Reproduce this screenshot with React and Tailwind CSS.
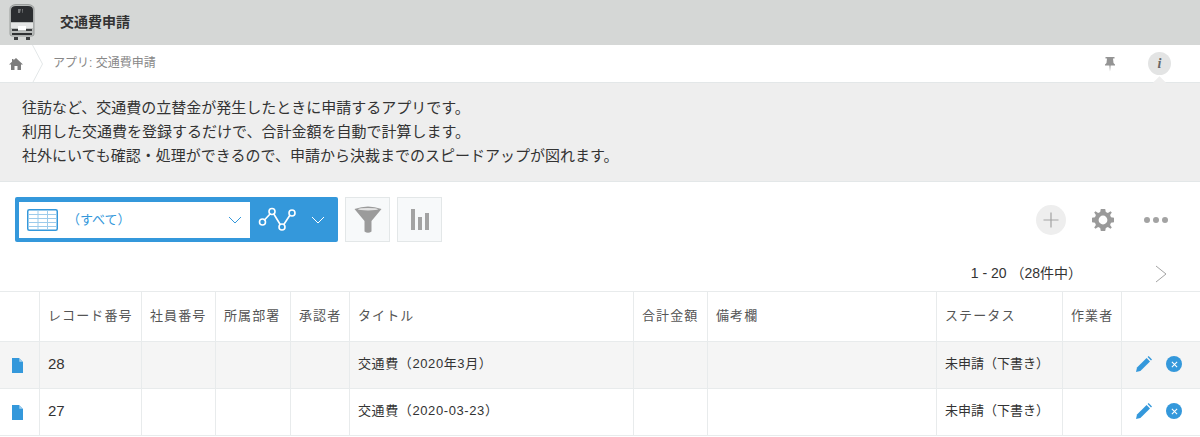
const FONT = { fontFamily: '"Liberation Sans", "Noto Sans CJK JP", sans-serif' }

const COLUMNS = [
    { label: '', width: 'w-[40px]' },
    { label: 'レコード番号', width: 'w-[102px]' },
    { label: '社員番号', width: 'w-[74px]' },
    { label: '所属部署', width: 'w-[75px]' },
    { label: '承認者', width: 'w-[59px]' },
    { label: 'タイトル', width: 'w-[284px]' },
    { label: '合計金額', width: 'w-[74px]' },
    { label: '備考欄', width: 'w-[229px]' },
    { label: 'ステータス', width: 'w-[126px]' },
    { label: '作業者', width: 'w-[59px]' },
    { label: '', width: 'flex-1' },
]

const ROWS = [
    { id: '28', title: '交通費（2020年3月）', status: '未申請（下書き）', bg: 'bg-[#f5f5f5]' },
    { id: '27', title: '交通費（2020-03-23）', status: '未申請（下書き）', bg: 'bg-white' },
]

const TrainIcon = () => (
    <svg width="30" height="40" viewBox="0 0 30 40" className="shrink-0">
        <path d="M3 6 Q3 2 9 1.5 L21 1.5 Q27 2 27 6 L27 31 Q27 33 25 33 L5 33 Q3 33 3 31 Z" fill="#b9bcbb" stroke="#9b9e9d" />
        <path d="M4 7 Q4 3 9 3 L21 3 Q26 3 26 7 L26 19 L4 19 Z" fill="#2b2d30" />
        <path d="M11 6 H14 L13 10 H11 Z M15 6 H16 L15.5 10 H15 Z" fill="#77797a" />
        <rect x="4" y="20" width="22" height="5" fill="#e4e5e5" />
        <rect x="11" y="23" width="8" height="4" fill="#ffffff" />
        <rect x="5" y="26" width="6" height="2" fill="#3b3d3f" />
        <rect x="19" y="26" width="6" height="2" fill="#3b3d3f" />
        <rect x="5" y="30" width="20" height="2" fill="#2f3133" />
        <rect x="7" y="34" width="4" height="3" fill="#3b3d3f" />
        <rect x="19" y="34" width="4" height="3" fill="#3b3d3f" />
    </svg>
)

const HomeIcon = () => (
    <svg width="14" height="14" viewBox="0 0 14 14" fill="#7d7d7d">
        <path d="M7 1 L14 7.5 L12 7.5 L12 13 L8.5 13 L8.5 9 L5.5 9 L5.5 13 L2 13 L2 7.5 L0 7.5 L3 4.7 L3 2 L4.5 2 L4.5 3.3 Z" />
    </svg>
)

const PinIcon = () => (
    <svg width="12" height="16" viewBox="0 0 12 16" fill="#949494">
        <path d="M1.5 1 H10.5 V2.5 H9 L9.5 7 L11 8.5 V9.5 H6.6 L6 15.5 L5.4 9.5 H1 V8.5 L2.5 7 L3 2.5 H1.5 Z" />
    </svg>
)

const TableIcon = () => (
    <svg width="31" height="22" viewBox="0 0 31 22">
        <rect x="0.75" y="0.75" width="29.5" height="20.5" rx="1.5" fill="#ffffff" stroke="#3498db" strokeWidth="1.5" />
        <path d="M1 5.5 H30 M1 9.5 H30 M1 13.5 H30 M1 17.5 H30 M11 1 V21 M20.5 1 V21" stroke="#9ccbeb" strokeWidth="1" fill="none" />
    </svg>
)

const GraphIcon = () => (
    <svg width="40" height="26" viewBox="0 0 40 26" fill="none" stroke="#ffffff" strokeWidth="1.6">
        <path d="M6 13.5 L12.5 6.5 M15.5 6.5 L22.5 18 M25.5 18 L32 8" />
        <circle cx="4.5" cy="15" r="3" />
        <circle cx="14" cy="4.5" r="3" />
        <circle cx="24" cy="20" r="3" />
        <circle cx="34" cy="6" r="3" />
    </svg>
)

const SelectChevron = ({ color }) => (
    <svg width="14" height="8" viewBox="0 0 14 8" fill="none" stroke={color} strokeWidth="1">
        <path d="M1 1 L7 7 L13 1" />
    </svg>
)

const FunnelIcon = () => (
    <svg width="28" height="28" viewBox="0 0 28 28">
        <path d="M0.5 3 Q14 -2 27.5 3 L17.5 15 V25.5 Q14 28 10.5 25.5 V15 Z" fill="#9b9b9b" />
        <ellipse cx="14" cy="3.2" rx="10" ry="1.3" fill="#e4e4e4" />
    </svg>
)

const BarsIcon = () => (
    <svg width="18" height="21" viewBox="0 0 18 21" fill="#a3a3a3">
        <rect x="0" y="0" width="4" height="21" />
        <rect x="7" y="8" width="4" height="13" />
        <rect x="14" y="4" width="4" height="17" />
    </svg>
)

const GearIcon = () => (
    <svg width="24" height="24" viewBox="0 0 24 24" fill="#9a9a9a">
        <path
            fillRule="evenodd"
            d="M9.8 1 H14.2 L14.8 4 L16.9 4.9 L19.5 3.2 L20.8 4.5 L19.1 7.1 L20 9.2 L23 9.8 V14.2 L20 14.8 L19.1 16.9 L20.8 19.5 L19.5 20.8 L16.9 19.1 L14.8 20 L14.2 23 H9.8 L9.2 20 L7.1 19.1 L4.5 20.8 L3.2 19.5 L4.9 16.9 L4 14.8 L1 14.2 V9.8 L4 9.2 L4.9 7.1 L3.2 4.5 L4.5 3.2 L7.1 4.9 L9.2 4 Z M12 7.6 A4.4 4.4 0 1 0 12 16.4 A4.4 4.4 0 1 0 12 7.6 Z"
        />
    </svg>
)

const FileIcon = () => (
    <svg width="11" height="15" viewBox="0 0 11 15" className="shrink-0">
        <path d="M0 0 H7 L11 4 V15 H0 Z" fill="#3498db" />
        <path d="M7.3 0.6 L10.4 3.7 H7.3 Z" fill="#a9d3f0" />
    </svg>
)

const PencilIcon = () => (
    <svg width="16" height="16" viewBox="0 0 16 16" fill="#3498db">
        <path d="M0 16 L1 11.6 L10.6 2 L14 5.4 L4.4 15 Z" />
        <path d="M11.6 1 L12.6 0 L16 3.4 L15 4.4 Z" />
    </svg>
)

const DeleteIcon = () => (
    <span className="flex h-[16px] w-[16px] items-center justify-center rounded-full bg-[#3498db]">
        <svg width="7" height="7" viewBox="0 0 8 8" stroke="#ffffff" strokeWidth="1.2">
            <path d="M1 1 L7 7 M7 1 L1 7" />
        </svg>
    </span>
)

const App = () => {
    return (
        <div className="h-[437px] w-[1200px] overflow-hidden bg-white" style={FONT}>
            <div className="flex h-[45px] items-center bg-[#d5d7d6] pl-[7px]">
                <TrainIcon />
                <h1 className="ml-[23px] pb-[1px] text-[14px] font-bold text-[#333333]">交通費申請</h1>
            </div>

            <div className="flex h-[38px] items-center border-b border-[#e3e7e8] bg-white">
                <div className="flex w-[32px] justify-center">
                    <HomeIcon />
                </div>
                <svg width="12" height="38" viewBox="0 0 12 38" fill="none" stroke="#e3e7e8" className="shrink-0">
                    <path d="M0.5 0 L10.5 19 L0.5 38" />
                </svg>
                <span className="ml-[9px] pb-[2px] text-[12px] text-[#888888]">アプリ: 交通費申請</span>
                <div className="ml-auto flex items-center pr-[29px]">
                    <PinIcon />
                    <span className="ml-[32px] flex h-[23px] w-[23px] items-center justify-center rounded-full bg-[#e3e4e4] font-['Liberation_Serif'] text-[14px] font-bold italic text-[#666666]">
                        i
                    </span>
                </div>
            </div>

            <div className="relative h-[99px] border-b border-[#e3e7e8] bg-[#eeeeee] px-[22px] pt-[13px] text-[15px] leading-[24px] text-[#333333]">
                <span className="absolute right-[36px] top-[-5px] h-[9px] w-[9px] rotate-45 bg-[#eeeeee]" />
                <p>往訪など、交通費の立替金が発生したときに申請するアプリです。</p>
                <p>利用した交通費を登録するだけで、合計金額を自動で計算します。</p>
                <p>社外にいても確認・処理ができるので、申請から決裁までのスピードアップが図れます。</p>
            </div>

            <div className="flex h-[74px] items-center pt-[1px] pl-[15px] pr-[32px]">
                <div className="flex h-[45px] w-[323px] items-center rounded-[2px] bg-[#3498db] pl-[4px]">
                    <div className="flex h-[36px] w-[231px] items-center bg-white pl-[8px] pr-[8px]">
                        <TableIcon />
                        <span className="ml-[9px] text-[13px] text-[#3498db]">（すべて）</span>
                        <span className="ml-auto">
                            <SelectChevron color="#3498db" />
                        </span>
                    </div>
                    <div className="ml-[8px]">
                        <GraphIcon />
                    </div>
                    <span className="ml-[13px]">
                        <SelectChevron color="#ffffff" />
                    </span>
                </div>
                <button type="button" className="ml-[7px] flex h-[45px] w-[45px] items-center justify-center border border-[#e3e7e8] bg-[#f7f9fa]">
                    <FunnelIcon />
                </button>
                <button type="button" className="ml-[7px] flex h-[45px] w-[45px] items-center justify-center border border-[#e3e7e8] bg-[#f7f9fa]">
                    <BarsIcon />
                </button>
                <div className="ml-auto flex items-center">
                    <span className="flex h-[30px] w-[30px] items-center justify-center rounded-full bg-[#eeeeee]">
                        <svg width="16" height="16" viewBox="0 0 16 16" stroke="#a3a3a3" strokeWidth="1.2">
                            <path d="M8 0.5 V15.5 M0.5 8 H15.5" />
                        </svg>
                    </span>
                    <span className="ml-[25px]">
                        <GearIcon />
                    </span>
                    <span className="ml-[29px] flex gap-[3px]">
                        <span className="h-[6px] w-[6px] rounded-full bg-[#a3a3a3]" />
                        <span className="h-[6px] w-[6px] rounded-full bg-[#a3a3a3]" />
                        <span className="h-[6px] w-[6px] rounded-full bg-[#a3a3a3]" />
                    </span>
                </div>
            </div>

            <div className="flex h-[35px] items-center justify-end pr-[33px] text-[14px] text-[#333333]">
                <span>1 - 20 （28件中）</span>
                <svg width="12" height="18" viewBox="0 0 12 18" fill="none" stroke="#a3a3a3" strokeWidth="1" className="ml-[73px]">
                    <path d="M1 1 L11 9 L1 17" />
                </svg>
            </div>

            <div className="border-y border-[#e8ebec]">
                <div className="flex h-[50px] border-b border-[#e8ebec] bg-white">
                    {COLUMNS.map((col, i) => (
                        <div
                            key={i}
                            className={`flex items-center border-r border-[#e8ebec] pb-[1px] pl-[8px] text-[13px] tracking-[1.1px] text-[#555555] last:border-r-0 ${col.width}`}
                        >
                            {col.label}
                        </div>
                    ))}
                </div>
                {ROWS.map((row) => (
                    <div key={row.id} className={`flex h-[47px] border-b border-[#e8ebec] text-[#333333] last:h-[46px] last:border-b-0 ${row.bg}`}>
                        <div className="flex w-[40px] items-center border-r border-[#e8ebec] pl-[12px]">
                            <FileIcon />
                        </div>
                        <div className="flex w-[102px] items-center border-r border-[#e8ebec] pb-[1px] pl-[8px] text-[15px]">{row.id}</div>
                        <div className="w-[74px] border-r border-[#e8ebec]" />
                        <div className="w-[75px] border-r border-[#e8ebec]" />
                        <div className="w-[59px] border-r border-[#e8ebec]" />
                        <div className="flex w-[284px] items-center border-r border-[#e8ebec] pb-[2px] pl-[8px] text-[13px] tracking-[0.6px]">{row.title}</div>
                        <div className="w-[74px] border-r border-[#e8ebec]" />
                        <div className="w-[229px] border-r border-[#e8ebec]" />
                        <div className="flex w-[126px] items-center border-r border-[#e8ebec] pb-[2px] pl-[8px] text-[13px]">{row.status}</div>
                        <div className="w-[59px] border-r border-[#e8ebec]" />
                        <div className="flex flex-1 items-center pb-[2px] pl-[14px]">
                            <PencilIcon />
                            <span className="ml-[14px]">
                                <DeleteIcon />
                            </span>
                        </div>
                    </div>
                ))}
            </div>
        </div>
    )
}

export default App
